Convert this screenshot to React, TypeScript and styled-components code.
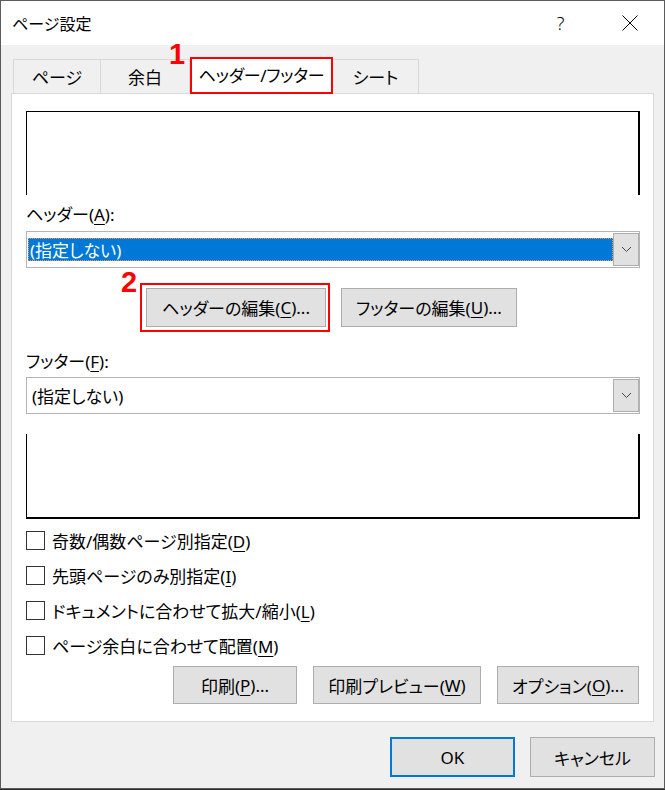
import React from 'react'
import styled, { createGlobalStyle } from 'styled-components'

const GlobalStyle = createGlobalStyle`
  html, body {
    margin: 0;
    padding: 0;
    background: #2b2b2b;
  }
`

const Window = styled.div`
  width: 665px;
  height: 789px;
  box-sizing: border-box;
  border: 1px solid #5b5b5b;
  background: #f0f0f0;
  display: flex;
  flex-direction: column;
  font-family: "Noto Sans", "Noto Sans CJK JP", sans-serif;
  font-size: 17px;
  font-feature-settings: "palt";
  color: #000;
`

const TitleBar = styled.div`
  height: 44px;
  background: #fff;
  display: flex;
  align-items: center;
  padding-left: 11px;
`

const TitleText = styled.div`
  flex: 1;
  font-size: 16px;
`

const CaptionButton = styled.div`
  width: 69px;
  height: 44px;
  display: flex;
  align-items: center;
  justify-content: center;
  font-size: 18px;
  font-weight: 300;
`

const Body = styled.div`
  flex: 1;
  display: flex;
  flex-direction: column;
  padding: 12px 10px 0 10px;
`

const TabRow = styled.div`
  height: 36px;
  display: flex;
  align-items: flex-end;
  padding-left: 2px;
`

const Tab = styled.div<{ $w: number; $first?: boolean }>`
  width: ${p => p.$w}px;
  height: 34px;
  box-sizing: border-box;
  border: 1px solid #d9d9d9;
  border-bottom: none;
  border-left: ${p => (p.$first ? '1px solid #d9d9d9' : 'none')};
  display: flex;
  align-items: center;
  justify-content: center;
`

const ActiveTab = styled.div`
  position: relative;
  z-index: 1;
  width: 143px;
  height: 37px;
  margin-bottom: -1px;
  box-sizing: border-box;
  background: #fff;
  border: 2px solid #ff0000;
  display: flex;
  align-items: center;
  justify-content: center;
  padding-bottom: 2px;
  letter-spacing: -0.3px;
`

const Marker = styled.span<{ $left: number; $top: number }>`
  position: absolute;
  left: ${p => p.$left}px;
  top: ${p => p.$top}px;
  font-family: "Liberation Sans", Arial, sans-serif;
  font-weight: 700;
  font-size: 29px;
  line-height: 29px;
  letter-spacing: 0;
  color: #ff0000;
`

const Panel = styled.div`
  background: #fff;
  border: 1px solid #d9d9d9;
  padding: 0 13px 17px 14px;
  display: flex;
  flex-direction: column;
`

const Preview = styled.div<{ $edge: 'top' | 'bottom' }>`
  box-sizing: border-box;
  height: ${p => (p.$edge === 'top' ? 84 : 85)}px;
  margin-top: ${p => (p.$edge === 'top' ? 17 : 20)}px;
  border-left: 1px solid #000;
  border-right: 2px solid #000;
  border-top: ${p => (p.$edge === 'top' ? '1px solid #000' : 'none')};
  border-bottom: ${p => (p.$edge === 'bottom' ? '2px solid #000' : 'none')};
`

const FieldLabel = styled.div<{ $mt: number }>`
  margin-top: ${p => p.$mt}px;
  height: 24px;
  line-height: 24px;
`

const Key = styled.span`
  text-decoration: underline;
  text-decoration-thickness: 1px;
  text-underline-offset: 3px;
`

const Combo = styled.div<{ $mt: number }>`
  margin-top: ${p => p.$mt}px;
  height: 37px;
  box-sizing: border-box;
  border: 1px solid #b4b4b4;
  display: flex;
`

const ComboValue = styled.div<{ $selected?: boolean }>`
  flex: 1;
  display: flex;
  align-items: center;
  box-sizing: border-box;
  ${p =>
    p.$selected
      ? `
    margin: 6px 0 6px 1px;
    background: #0078d7;
    color: #fff;
    border: 1px dotted #ff9a3c;
    padding-left: 1px;
  `
      : `
    padding-left: 5px;
  `}
`

const ComboButton = styled.div`
  width: 26px;
  margin: 1px 0;
  box-sizing: border-box;
  background: #e1e1e1;
  border: 1px solid #adadad;
  display: flex;
  align-items: center;
  justify-content: center;
`

const EditRow = styled.div`
  margin-top: 20px;
  display: flex;
  gap: 15px;
  padding-left: 120px;
`

const Button = styled.div<{ $w: number; $h?: number; $default?: boolean }>`
  width: ${p => p.$w}px;
  height: ${p => p.$h ?? 39}px;
  box-sizing: border-box;
  background: #e1e1e1;
  border: ${p => (p.$default ? '2px solid #0078d7' : '1px solid #adadad')};
  display: flex;
  align-items: center;
  justify-content: center;
  white-space: nowrap;
`

const Highlight = styled.div`
  position: relative;

  &::after {
    content: '';
    position: absolute;
    left: -6px;
    right: -4px;
    top: -5px;
    bottom: -5px;
    border: 2px solid #ff0000;
    pointer-events: none;
  }
`

const CheckList = styled.div`
  margin-top: 4px;
  display: flex;
  flex-direction: column;
`

const CheckRow = styled.label`
  height: 35px;
  display: flex;
  align-items: center;
  gap: 7px;
`

const CheckBox = styled.span`
  width: 19px;
  height: 19px;
  box-sizing: border-box;
  border: 1px solid #333;
  background: #fff;
`

const ActionRow = styled.div`
  margin-top: 3px;
  display: flex;
  justify-content: flex-end;
  gap: 16px;
  padding-right: 1px;
`

const DialogFooter = styled.div`
  margin-top: 15px;
  margin-right: -1px;
  display: flex;
  justify-content: flex-end;
  gap: 15px;
`

const Chevron = () => (
  <svg width="11" height="7" viewBox="0 0 11 7">
    <polyline points="1,1 5.5,5.5 10,1" fill="none" stroke="#444" strokeWidth="1" />
  </svg>
)

const CloseIcon = () => (
  <svg width="16" height="16" viewBox="0 0 16 16">
    <path d="M0.5 0.5 L15.5 15.5 M15.5 0.5 L0.5 15.5" stroke="#000" strokeWidth="1" />
  </svg>
)

const checks: [string, string, string][] = [
  ['奇数/偶数ページ別指定(', 'D', ')'],
  ['先頭ページのみ別指定(', 'I', ')'],
  ['ドキュメントに合わせて拡大/縮小(', 'L', ')'],
  ['ページ余白に合わせて配置(', 'M', ')'],
]

export default function App() {
  return (
    <>
      <GlobalStyle />
      <Window>
        <TitleBar>
          <TitleText>ページ設定</TitleText>
          <CaptionButton>?</CaptionButton>
          <CaptionButton>
            <CloseIcon />
          </CaptionButton>
        </TitleBar>

        <Body>
          <TabRow>
            <Tab $w={88} $first>ページ</Tab>
            <Tab $w={89}>余白</Tab>
            <ActiveTab>
              <Marker $left={-23} $top={-19}>1</Marker>
              ヘッダー/フッター
            </ActiveTab>
            <Tab $w={86}>シート</Tab>
          </TabRow>

          <Panel>
            <Preview $edge="top" />

            <FieldLabel $mt={8}>
              ヘッダー(<Key>A</Key>):
            </FieldLabel>
            <Combo $mt={4}>
              <ComboValue $selected>(指定しない)</ComboValue>
              <ComboButton>
                <Chevron />
              </ComboButton>
            </Combo>

            <EditRow>
              <Highlight>
                <Marker $left={-25} $top={-20}>2</Marker>
                <Button $w={180}>
                  ヘッダーの編集(<Key>C</Key>)...
                </Button>
              </Highlight>
              <Button $w={176}>
                フッターの編集(<Key>U</Key>)...
              </Button>
            </EditRow>

            <FieldLabel $mt={23}>
              フッター(<Key>F</Key>):
            </FieldLabel>
            <Combo $mt={3}>
              <ComboValue>(指定しない)</ComboValue>
              <ComboButton>
                <Chevron />
              </ComboButton>
            </Combo>

            <Preview $edge="bottom" />

            <CheckList>
              {checks.map(([pre, key, post]) => (
                <CheckRow key={key}>
                  <CheckBox />
                  <span>
                    {pre}
                    <Key>{key}</Key>
                    {post}
                  </span>
                </CheckRow>
              ))}
            </CheckList>

            <ActionRow>
              <Button $w={124} $h={38}>
                印刷(<Key>P</Key>)...
              </Button>
              <Button $w={168} $h={38}>
                印刷プレビュー(<Key>W</Key>)
              </Button>
              <Button $w={142} $h={38}>
                オプション(<Key>O</Key>)...
              </Button>
            </ActionRow>
          </Panel>

          <DialogFooter>
            <Button $w={125} $h={40} $default>OK</Button>
            <Button $w={125} $h={40}>キャンセル</Button>
          </DialogFooter>
        </Body>
      </Window>
    </>
  )
}
